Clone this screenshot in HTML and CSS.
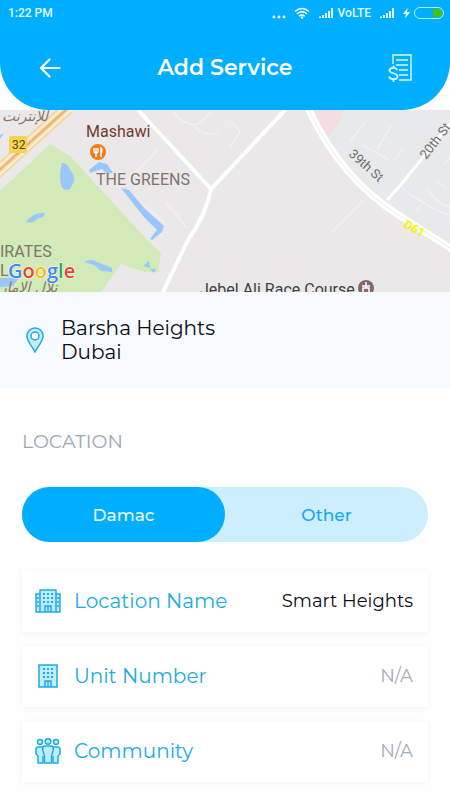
FILE: index.html
```html
<!DOCTYPE html>
<html lang="en">
<head>
    <meta charset="UTF-8">
    <meta name="viewport" content="width=device-width, initial-scale=1.0">
    <title>Add Service</title>
    <link rel="stylesheet" href="styles.css">
</head>
<body>
    <header class="header">
        <div class="status-bar">
            <span>1:22 PM</span>
            <div class="status-icons">
                <svg width="14" height="12" fill="#fff"><circle cx="2" cy="10" r="1.4"/><circle cx="7" cy="10" r="1.4"/><circle cx="12" cy="10" r="1.4"/></svg>
                <svg class="wifi" width="16" height="12" fill="none" stroke="#fff" stroke-width="1.4"><path d="M1 4.5Q8-1.5 15 4.5M3 7Q8 2.5 13 7M5.2 9.2Q8 6.8 10.8 9.2"/><circle cx="8" cy="10.5" r=".6" fill="#fff"/></svg>
                <svg width="16" height="12" stroke="#e4faff" stroke-width="2"><path d="M2 11V9.500M5 11V8M8 11V6M11 11V4M14 11V1"/></svg>
                <span>VoLTE</span>
                <svg class="signal" width="16" height="12" stroke="#e4faff" stroke-width="2"><path d="M2 11V9.500M5 11V8M8 11V6M11 11V4M14 11V1"/></svg>
                <svg width="7" height="12" fill="#fff"><path d="M4.500 1L0 7H3L2 11.500L7 5H4Z"/></svg>
                <svg width="30" height="12"><rect x=".5" y=".5" width="29" height="11" rx="5.500" fill="none" stroke="#b5f0f4"/><path d="M19 2H24A4 4 0 0 1 24 10H19Z" fill="#44c510"/></svg>
            </div>
        </div>
        <div class="title-bar">
            <button class="icon-button" type="button" aria-label="Back">
                <svg width="22" height="22" fill="none" stroke="#fff" stroke-width="2.2" stroke-linecap="round" stroke-linejoin="round"><path d="M20.500 11H2M10.500 2.500L2 11L10.500 19.500"/></svg>
            </button>
            <h1>Add Service</h1>
            <button class="icon-button" type="button" aria-label="Invoice">
                <svg width="24" height="28" fill="none" stroke="#d8f8ff" stroke-width="1.400"><path d="M5 10V1H23V26H11M8 6H20M8 11H20M11 16H20M11 21H20"/><path stroke-width="1.800" d="M9 16C8.500 13 1.500 13 1.500 16.500C1.500 20 9.500 18.500 9.500 22.500C9.500 26 2 26 1 22.500M5.500 11.500V14M5.500 25V28"/></svg>
            </button>
        </div>
    </header>

    <main>
        <svg class="map" viewBox="0 110 450 182" preserveAspectRatio="xMidYMid slice" role="img" aria-label="Map of Barsha Heights">
            <rect x="0" y="110" width="450" height="182" fill="#ebe8ea"/>
            <path d="M286 110L301 110H450V245C420 235 392 214 374 201C340 170 320 140 306 110Z" fill="#e7e9ea"/>
            <path d="M314 110H344Q340 126 328 137Q319 123 314 110Z" fill="#f3dce2"/>
            <path d="M0 191L50 144L70 156L150 243L161 253L158 272L145 272L121 264L101 292H0Z" fill="#d1eab8"/>
            <g fill="none" stroke-linejoin="round">
                <path d="M-5 174L68 108" stroke="#f5d5a5" stroke-width="13"/>
                <path d="M-5 170L64 107M-5 179L73 108" stroke="#fdf0d5" stroke-width="2"/>
                <path d="M-5 174L68 108" stroke="#eba865" stroke-width="1.500"/>
                <path d="M128 180L158 150M166 202L187 228M145 206L165 223M174 112Q185 127 198 124L212 112M192 124Q202 137 218 133M231 121L240 131L230 148M332 232L363 201M350 142L366 121M363 145L389 160M377 149L391 126M395 160L402 150M402 188Q421 204 450 216M415 211L422 204M436 181L447 188M428 190Q438 205 450 207M418 198L431 208M444 165L450 158" stroke="#f3f0f3" stroke-width="1.500"/>
                <path d="M138 110L211 189M287 108L211 189Q206 215 188 240L163 292" stroke="#fff" stroke-width="4"/>
                <path d="M308 108C330 156 362 192 400 216L455 251" stroke="#fff" stroke-width="7"/>
                <path d="M308 108C330 156 362 192 400 216L455 251" stroke="#efecef"/>
                <path d="M387 200L399 187L455 118" stroke="#fff" stroke-width="3"/>
            </g>
            <g fill="#99c6fc">
                <path d="M62 163Q67 162 71 171Q77 179 72 185Q70 193 62 188Q58 177 62 163Z"/>
                <path d="M26 222Q33 212 45 213Q45 218 38 218Q33 224 26 222Z"/>
                <path d="M89 170L99 162L107 164L113 173L107 174L102 169L90 173Z"/>
                <path d="M121 188L129 190L145 209L164 226L162 232L152 240L150 239L157 230L143 216L136 207Z"/>
                <path d="M84 262Q92 258 97 262L112 268V272L101 271L94 265Z"/>
                <path d="M143 266L149 261L150 268ZM150 269L156 269L154 273ZM0 278L19 278L13 286L0 287Z"/>
                <path d="M0 135L4 133L0 139Z"/>
            </g>
            <rect x="9" y="136" width="18" height="17" rx="2" fill="#f9d34b"/>
            <text x="12" y="149" class="map-shield">32</text>
            <text x="2" y="121" class="map-arabic">للإنترنت</text>
            <text x="86" y="137" class="map-place">Mashawi</text>
            <circle cx="98" cy="152" r="8" fill="#ee7e16"/>
            <path d="M94 148V151Q94 153 96 153V157M96 148V153M98 148V151Q98 153 96 153M101 157V148Q103 150 101 153" fill="none" stroke="#fff" stroke-width="1.400"/>
            <text x="96" y="185" class="map-area">THE GREENS</text>
            <text x="0" y="257" class="map-area">IRATES</text>
            <text x="0" y="276" class="map-area">L</text>
            <text x="0" y="292" class="map-arabic">تلال الإمار</text>
            <text x="8" y="278" class="map-logo"><tspan fill="#4285f4">G</tspan><tspan fill="#ea4335">o</tspan><tspan fill="#fbbc05">o</tspan><tspan fill="#4285f4">g</tspan><tspan fill="#34a853">l</tspan><tspan fill="#ea4335">e</tspan></text>
            <text transform="translate(348 155) rotate(42)" class="map-street">39th St</text>
            <text transform="translate(426 160) rotate(-52)" class="map-street">20th St</text>
            <text transform="translate(403 227) rotate(29)" class="map-road">D61</text>
            <text x="200" y="295" class="map-course">Jebel Ali Race Course</text>
            <circle cx="366" cy="288" r="8" fill="#806b69"/>
            <path d="M362 286H370M366 282V288M363 293V288H369V293" fill="none" stroke="#fff" stroke-width="1.500"/>
        </svg>

        <section class="address">
            <svg width="20" height="26" fill="#bdeeff" stroke="#22a9e2" stroke-width="1.500"><path d="M10 25C8 20 2 15 2 9A8 8 0 0 1 18 9C18 15 12 20 10 25Z"/><circle cx="10" cy="9" r="4" fill="#fff"/></svg>
            <p>Barsha Heights<br>Dubai</p>
        </section>

        <form class="location">
            <h2>LOCATION</h2>
            <div class="tabs">
                <button class="tab active" type="button" aria-pressed="true">Damac</button>
                <button class="tab" type="button" aria-pressed="false">Other</button>
            </div>

            <div class="card">
                <svg class="card-icon" viewBox="0 0 26 26"><path d="M1 24V6H5V2H21V6H25V24ZM5 6V24M21 6V24M10 24V18H16V24M13 18V24"/><path class="windows" d="M8 6H18M8 10H18M8 14H18"/><path d="M3 9V21M23 9V21" stroke-dasharray="2 2"/></svg>
                <label for="locationName">Location Name</label>
                <input type="text" id="locationName" value="Smart Heights">
            </div>
            <div class="card">
                <svg class="card-icon" viewBox="0 0 26 26"><path d="M4 24V2H22V24ZM10 24V18H16V24M13 18V24"/><path class="windows" d="M8 6H18M8 10H18M8 14H18"/></svg>
                <label for="unitNumber">Unit Number</label>
                <input type="text" id="unitNumber" placeholder="N/A">
            </div>
            <div class="card">
                <svg class="card-icon" viewBox="0 0 26 26"><circle cx="5" cy="4" r="2.500"/><circle cx="21" cy="4" r="2.500"/><path d="M9 9H3Q1 9 1 11V16L3 18V25H8V18M17 9H23Q25 9 25 11V16L23 18V25H18V18"/><circle cx="13" cy="3.500" r="2.800"/><path d="M9 8H17Q19 9 18 13L16.500 18V25H9.500V18L8 13Q7 9 9 8Z"/></svg>
                <label for="community">Community</label>
                <input type="text" id="community" placeholder="N/A">
            </div>
        </form>
    </main>
</body>
</html>
```

FILE: styles.css
```css
* { box-sizing: border-box; }
body { margin: 0; background: #fefefe; color: #0b0b12; font-family: Montserrat, Inter, sans-serif; }
h1, h2, p { margin: 0; }
svg { display: block; flex-shrink: 0; }
button, input { font-family: inherit; border: none; background: none; padding: 0; }
button { cursor: pointer; }

/* header */
.header { height: 110px; background: #00aeff; color: #fff; border-radius: 0 0 48px 48px; }
.status-bar { display: flex; justify-content: space-between; align-items: center; height: 26px; padding: 0 6px 0 8px; font: 500 12px/16px Roboto, sans-serif; color: #e4faff; }
.status-icons { display: flex; align-items: center; gap: 4px; }
.wifi { margin: 0 4px; }
.signal { margin: 0 4px; }
.title-bar { display: flex; justify-content: space-between; align-items: center; height: 84px; padding: 0 36px; }
.title-bar h1 { font-size: 22px; line-height: 28px; font-weight: 600; }
.icon-button { display: flex; align-items: center; justify-content: center; width: 28px; height: 32px; }

/* map */
.map { width: 100%; height: 182px; font-family: Roboto, sans-serif; }
.map-shield { font-size: 12px; fill: #54451a; }
.map-arabic { font-family: "DejaVu Sans", sans-serif; font-size: 14px; font-style: italic; fill: #85776c; }
.map-place { font-size: 16px; fill: #703c30; }
.map-area { font-size: 16px; fill: #80746d; }
.map-logo { font: 600 20px "Open Sans", sans-serif; stroke: #fff; stroke-width: 1px; paint-order: stroke; }
.map-street { font-size: 13px; fill: #6d6d70; }
.map-road { font-size: 12px; font-weight: 700; fill: #f2f500; }
.map-course { font-size: 16px; fill: #3f4043; }

/* address */
.address { display: flex; align-items: center; gap: 16px; height: 96px; padding: 0 25px; background: #f7faff; }
.address p { font-size: 20px; line-height: 24px; }

/* location form */
.location { padding: 40px 22px 0; }
.location h2 { font-size: 19px; line-height: 28px; font-weight: 400; color: #9ba8b8; }
.tabs { display: flex; height: 55px; margin: 31px 0 29px; border-radius: 28px; background: #cceeff; }
.tab { flex: 1; border-radius: 28px; color: #17a8ee; font-size: 17px; font-weight: 500; }
.tab.active { background: #00aeff; color: #eafaff; }
.card { display: flex; align-items: center; height: 61px; margin-bottom: 14px; padding: 0 15px 2px 13px; background: #fff; box-shadow: 0 1px 5px #f4f4fa; }
.card-icon { width: 26px; height: 26px; margin-right: 13px; fill: #bdeeff; stroke: #22a9e2; stroke-width: 1.5; }
.card-icon .windows { stroke-width: 2; stroke-dasharray: 2 2; }
.card label { white-space: nowrap; font-size: 20px; color: #22a9e2; }
.card input { flex: 1; min-width: 0; text-align: right; font-size: 18px; color: #0b0b12; }
.card input::placeholder { color: #a5adbc; opacity: 1; }
```
